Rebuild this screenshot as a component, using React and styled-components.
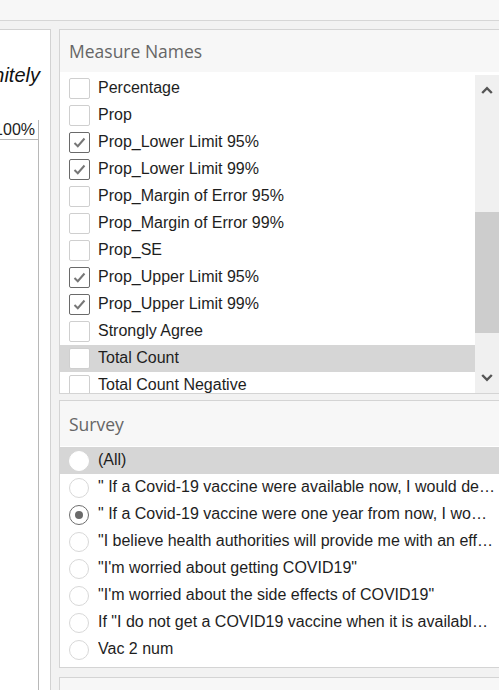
import React from "react";
import styled, { createGlobalStyle } from "styled-components";

const Global = createGlobalStyle`
  *, *::before, *::after { box-sizing: border-box; }
  html, body { margin: 0; padding: 0; }
  body { background: #f4f4f4; overflow: hidden; font-family: Arial, "Liberation Sans", sans-serif; }
`;

const Page = styled.div`
  width: 499px;
  height: 690px;
  overflow: hidden;
  background: #f2f2f2;
  display: flex;
  flex-direction: column;
`;

const TopBar = styled.div`
  height: 21px;
  flex: none;
  background: #f7f7f7;
  border-bottom: 1px solid #d6d6d6;
`;

const Body = styled.div`
  flex: 1;
  display: flex;
  padding-top: 8px;
  min-height: 0;
`;

const LeftPanel = styled.div`
  width: 51px;
  flex: none;
  background: #fff;
  border: 1px solid #d2d2d2;
  border-left: none;
  border-bottom: none;
  margin-right: 8px;
  display: flex;
  flex-direction: column;
  overflow: hidden;
`;

const ChartTitle = styled.div`
  height: 30px;
  margin-top: 30px;
  padding-right: 10px;
  display: flex;
  justify-content: flex-end;
  align-items: center;
  font-family: "Liberation Sans", Arial, sans-serif;
  font-style: italic;
  font-size: 20px;
  color: #111;
  white-space: nowrap;
`;

const Axis = styled.div`
  margin-top: 30px;
  width: 39px;
  flex: 1;
  border-right: 1px solid #b8b8b8;
  display: flex;
  flex-direction: column;
`;

const AxisLabel = styled.div`
  height: 20px;
  border-bottom: 1px solid #b8b8b8;
  display: flex;
  justify-content: flex-end;
  align-items: center;
  padding-right: 3px;
  font-family: "Liberation Sans", Arial, sans-serif;
  font-size: 16px;
  color: #222;
  white-space: nowrap;
  overflow: hidden;
`;

const RightColumn = styled.div`
  width: 440px;
  flex: none;
  display: flex;
  flex-direction: column;
`;

const Card = styled.div`
  background: #fff;
  border: 1px solid #d4d4d4;
  border-right: none;
  display: flex;
  flex-direction: column;
  flex: none;
  height: ${(p) => p.$h}px;
  margin-bottom: ${(p) => p.$mb || 0}px;
  overflow: hidden;
`;

const CardHeader = styled.div`
  height: ${(p) => p.$h}px;
  flex: none;
  background: #f7f7f7;
  display: flex;
  align-items: center;
  padding-left: 9px;
  font-family: "Open Sans", "Liberation Sans", sans-serif;
  font-size: 17.5px;
  color: #666;
`;

const ListArea = styled.div`
  flex: 1;
  display: flex;
  min-height: 0;
  padding-top: ${(p) => p.$pt}px;
  overflow: hidden;
`;

const Rows = styled.div`
  flex: 1;
  min-width: 0;
  display: flex;
  flex-direction: column;
`;

const Row = styled.div`
  height: 27px;
  flex: none;
  display: flex;
  align-items: center;
  padding-left: 9px;
  padding-right: 4px;
  background: ${(p) => (p.$hl ? "#d6d6d6" : "transparent")};
  font-family: "Liberation Sans", Arial, sans-serif;
  font-size: 16px;
  color: #1e1e1e;
`;

const Label = styled.span`
  margin-left: ${(p) => p.$ml}px;
  margin-top: -2px;
  white-space: nowrap;
  overflow: hidden;
  text-overflow: ellipsis;
  min-width: 0;
`;

const Box = styled.span`
  width: 21px;
  height: 21px;
  flex: none;
  border: 1px solid ${(p) => (p.$on ? "#6a6a6a" : "#cfcfcf")};
  border-radius: 2px;
  background: #fff;
  display: flex;
  align-items: center;
  justify-content: center;
  margin-top: -1px;
`;

const Radio = styled.span`
  width: 20px;
  height: 20px;
  flex: none;
  border-radius: 50%;
  border: 1px solid ${(p) => (p.$on ? "#6e6e6e" : p.$hl ? "#fff" : "#d8d8d8")};
  background: #fff;
  display: flex;
  align-items: center;
  justify-content: center;
  &::after {
    content: "";
    width: 8px;
    height: 8px;
    border-radius: 50%;
    background: ${(p) => (p.$on ? "#6a6a6a" : "transparent")};
  }
`;

const ScrollBar = styled.div`
  width: 24px;
  flex: none;
  background: #f0f0f0;
  display: flex;
  flex-direction: column;
`;

const ScrollBtn = styled.div`
  height: 30px;
  flex: none;
  display: flex;
  align-items: center;
  justify-content: center;
`;

const Track = styled.div`
  flex: 1;
  display: flex;
  flex-direction: column;
`;

const Thumb = styled.div`
  margin-top: ${(p) => p.$top}px;
  height: ${(p) => p.$h}px;
  background: #cdcdcd;
`;

const Check = () => (
  <svg width="13" height="11" viewBox="0 0 13 11">
    <path d="M1.5 6 L4.8 9.2 L11.5 1.5" fill="none" stroke="#777" strokeWidth="2" />
  </svg>
);

const Chevron = ({ up }) => (
  <svg width="12" height="8" viewBox="0 0 12 8">
    <path
      d={up ? "M1.2 7 L6 2.2 L10.8 7" : "M1.2 1 L6 5.8 L10.8 1"}
      fill="none"
      stroke="#555"
      strokeWidth="2.4"
    />
  </svg>
);

const measures = [
  ["Percentage", false],
  ["Prop", false],
  ["Prop_Lower Limit 95%", true],
  ["Prop_Lower Limit 99%", true],
  ["Prop_Margin of Error 95%", false],
  ["Prop_Margin of Error 99%", false],
  ["Prop_SE", false],
  ["Prop_Upper Limit 95%", true],
  ["Prop_Upper Limit 99%", true],
  ["Strongly Agree", false],
  ["Total Count", false, true],
  ["Total Count Negative", false],
];

const surveys = [
  ["(All)", false, true],
  ['" If a Covid-19 vaccine were available now, I would definitely get it"', false],
  ['" If a Covid-19 vaccine were one year from now, I would get it"', true],
  ['"I believe health authorities will provide me with an effective vaccine"', false],
  ['"I\'m worried about getting COVID19"', false],
  ['"I\'m worried about the side effects of COVID19"', false],
  ['If "I do not get a COVID19 vaccine when it is available, I will regret it"', false],
  ["Vac 2 num", false],
];

export default function App() {
  return (
    <Page>
      <Global />
      <TopBar />
      <Body>
        <LeftPanel>
          <ChartTitle>Definitely</ChartTitle>
          <Axis>
            <AxisLabel>100%</AxisLabel>
          </Axis>
        </LeftPanel>
        <RightColumn>
          <Card $h={365} $mb={6}>
            <CardHeader $h={42}>Measure Names</CardHeader>
            <ListArea $pt={3}>
              <Rows>
                {measures.map(([name, on, hl]) => (
                  <Row key={name} $hl={hl}>
                    <Box $on={on}>{on && <Check />}</Box>
                    <Label $ml={8}>{name}</Label>
                  </Row>
                ))}
              </Rows>
              <ScrollBar>
                <ScrollBtn>
                  <Chevron up />
                </ScrollBtn>
                <Track>
                  <Thumb $top={107} $h={121} />
                </Track>
                <ScrollBtn>
                  <Chevron />
                </ScrollBtn>
              </ScrollBar>
            </ListArea>
          </Card>
          <Card $h={268} $mb={9}>
            <CardHeader $h={45}>Survey</CardHeader>
            <ListArea $pt={1}>
              <Rows>
                {surveys.map(([name, on, hl]) => (
                  <Row key={name} $hl={hl}>
                    <Radio $on={on} $hl={hl} />
                    <Label $ml={9}>{name}</Label>
                  </Row>
                ))}
              </Rows>
            </ListArea>
          </Card>
          <Card $h={40}>
            <CardHeader $h={40} />
          </Card>
        </RightColumn>
      </Body>
    </Page>
  );
}
